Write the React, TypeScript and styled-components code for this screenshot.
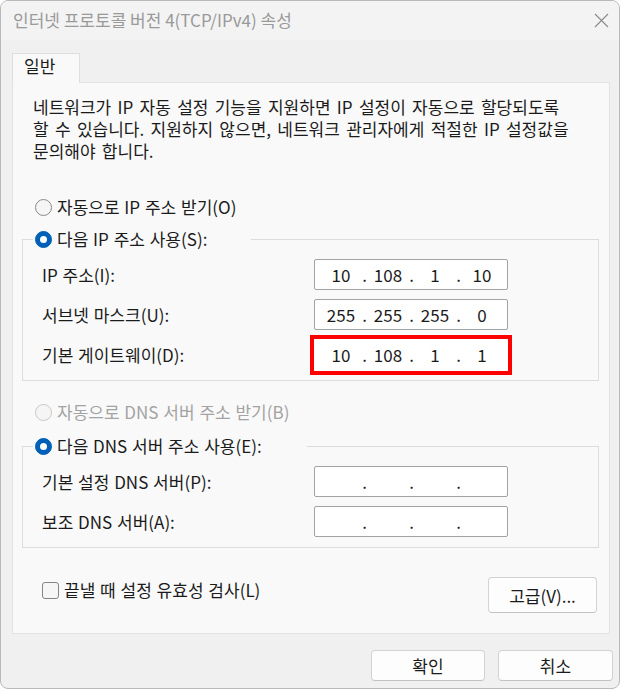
import React from "react";
import styled, { createGlobalStyle } from "styled-components";

const GlobalStyle = createGlobalStyle`
  body {
    margin: 0;
    background: #ffffff;
    font-family: "Noto Sans CJK KR", "Noto Sans", sans-serif;
    font-size: 17px;
    word-spacing: 1px;
    color: #1b1b1b;
  }
`;

const Window = styled.div`
  box-sizing: border-box;
  width: 620px;
  height: 689px;
  border: 1px solid #b9b9b9;
  border-radius: 8px;
  background: #f0f0f0;
  overflow: hidden;
  display: flex;
  flex-direction: column;
`;

const TitleBar = styled.div`
  height: 39px;
  display: flex;
  align-items: center;
  justify-content: space-between;
  padding: 0 10px 0 12px;
  background: #f3f3f3;
`;

const Title = styled.span`
  color: #9a9a9a;
  line-height: 22px;
  margin-top: -1px;
  word-spacing: 0;
`;

const Body = styled.div`
  flex: 1;
  display: flex;
  flex-direction: column;
  padding: 13px 0 0 11px;
`;

const TabStrip = styled.div`
  display: flex;
`;

const Tab = styled.div`
  box-sizing: border-box;
  width: 68px;
  height: 30px;
  margin-bottom: -1px;
  padding: 1px 0 0 11px;
  border: 1px solid #dedede;
  border-bottom: none;
  background: #f9f9f9;
  line-height: 22px;
  position: relative;
`;

const Panel = styled.div`
  box-sizing: border-box;
  height: 552px;
  margin-right: 9px;
  border: 1px solid #e2e2e2;
  background: #f9f9f9;
  padding: 13px 10px 0 9px;
  display: flex;
  flex-direction: column;
`;

const Description = styled.p`
  margin: 0 0 0 11px;
  line-height: 22px;
  word-spacing: 2.5px;
`;

const Choice = styled.label<{ $disabled?: boolean }>`
  display: flex;
  align-items: center;
  gap: 5px;
  height: 22px;
  line-height: 22px;
  color: ${(p) => (p.$disabled ? "#a3a3a3" : "#1b1b1b")};
`;

const RadioCircle = styled.span<{ $checked?: boolean; $disabled?: boolean }>`
  box-sizing: border-box;
  width: 17px;
  height: 17px;
  border-radius: 50%;
  flex-shrink: 0;
  display: flex;
  align-items: center;
  justify-content: center;
  background: ${(p) => (p.$checked ? "#0060b8" : "#f5f5f5")};
  border: 1px solid
    ${(p) => (p.$checked ? "#0060b8" : p.$disabled ? "#c8c8c8" : "#8a8a8a")};

  &::after {
    content: "";
    display: ${(p) => (p.$checked ? "block" : "none")};
    width: 7px;
    height: 7px;
    border-radius: 50%;
    background: #ffffff;
  }
`;

const ChoiceRow = styled.div<{ $top: number }>`
  margin: ${(p) => p.$top}px 0 0 13px;
`;

const Group = styled.fieldset<{ $top: number }>`
  margin: ${(p) => p.$top}px 0 0 0;
  padding: 9px 90px 10px 0;
  border: 1px solid #dcdcdc;
  display: flex;
  flex-direction: column;
  gap: 9px;
`;

const Legend = styled.legend<{ $width: number }>`
  box-sizing: border-box;
  width: ${(p) => p.$width}px;
  margin-left: 10px;
  padding: 0 0 0 2px;
  background: #f9f9f9;
`;

const FieldRow = styled.div`
  display: flex;
  align-items: center;
  justify-content: space-between;
  height: 31px;
  padding-left: 19px;
`;

const IpBox = styled.div<{ $highlight?: boolean }>`
  box-sizing: border-box;
  width: 194px;
  height: ${(p) => (p.$highlight ? 32 : 31)}px;
  display: flex;
  align-items: center;
  padding-left: 6px;
  background: #ffffff;
  border: 1px solid ${(p) => (p.$highlight ? "#ffffff" : "#a3a3a3")};
  border-radius: ${(p) => (p.$highlight ? 0 : 2)}px;
  outline: ${(p) => (p.$highlight ? "4px solid #ff0000" : "none")};
`;

const Octet = styled.span`
  width: 40px;
  text-align: center;
  line-height: 22px;
`;

const Dot = styled.span`
  width: 7px;
  text-align: center;
  line-height: 22px;
`;

const BottomRow = styled.div`
  margin: 29px 2px 0 20px;
  display: flex;
  justify-content: space-between;
  align-items: flex-start;
`;

const CheckLabel = styled.label`
  display: flex;
  align-items: center;
  gap: 5px;
  height: 22px;
  margin-top: 2px;
  line-height: 22px;
`;

const CheckBox = styled.span`
  box-sizing: border-box;
  width: 17px;
  height: 17px;
  border: 1px solid #858585;
  border-radius: 3px;
  background: #f6f6f6;
`;

const Button = styled.button<{ $width: number; $height: number }>`
  box-sizing: border-box;
  width: ${(p) => p.$width}px;
  height: ${(p) => p.$height}px;
  padding: 0;
  border: 1px solid #d3d3d3;
  border-bottom-color: #c2c2c2;
  border-radius: 4px;
  background: #fdfdfd;
  font-family: inherit;
  font-size: 17px;
  color: #1b1b1b;
`;

const Footer = styled.div`
  display: flex;
  justify-content: flex-end;
  gap: 13px;
  padding: 16px 6px 0 0;
`;

type RadioProps = { label: string; checked?: boolean; disabled?: boolean };

function Radio({ label, checked, disabled }: RadioProps) {
  return (
    <Choice $disabled={disabled}>
      <RadioCircle $checked={checked} $disabled={disabled} />
      {label}
    </Choice>
  );
}

function IpField({ value, highlight }: { value?: string[]; highlight?: boolean }) {
  const parts = value ?? ["", "", "", ""];
  return (
    <IpBox $highlight={highlight}>
      {parts.map((part, i) => (
        <React.Fragment key={i}>
          <Octet>{part}</Octet>
          {i < 3 && <Dot>.</Dot>}
        </React.Fragment>
      ))}
    </IpBox>
  );
}

function CloseIcon() {
  return (
    <svg width="15" height="15" viewBox="0 0 15 15">
      <path d="M1 1 L14 14 M14 1 L1 14" stroke="#8a8a8a" strokeWidth="1.1" fill="none" />
    </svg>
  );
}

export default function App() {
  return (
    <>
      <GlobalStyle />
      <Window>
        <TitleBar>
          <Title>인터넷 프로토콜 버전 4(TCP/IPv4) 속성</Title>
          <CloseIcon />
        </TitleBar>
        <Body>
          <TabStrip>
            <Tab>일반</Tab>
          </TabStrip>
          <Panel>
            <Description>
              네트워크가 IP 자동 설정 기능을 지원하면 IP 설정이 자동으로 할당되도록
              <br />
              할 수 있습니다. 지원하지 않으면, 네트워크 관리자에게 적절한 IP 설정값을
              <br />
              문의해야 합니다.
            </Description>

            <ChoiceRow $top={34}>
              <Radio label="자동으로 IP 주소 받기(O)" />
            </ChoiceRow>

            <Group $top={10}>
              <Legend $width={218}>
                <Radio label="다음 IP 주소 사용(S):" checked />
              </Legend>
              <FieldRow>
                <span>IP 주소(I):</span>
                <IpField value={["10", "108", "1", "10"]} />
              </FieldRow>
              <FieldRow>
                <span>서브넷 마스크(U):</span>
                <IpField value={["255", "255", "255", "0"]} />
              </FieldRow>
              <FieldRow>
                <span>기본 게이트웨이(D):</span>
                <IpField value={["10", "108", "1", "1"]} highlight />
              </FieldRow>
            </Group>

            <ChoiceRow $top={20}>
              <Radio label="자동으로 DNS 서버 주소 받기(B)" disabled />
            </ChoiceRow>

            <Group $top={12}>
              <Legend $width={274}>
                <Radio label="다음 DNS 서버 주소 사용(E):" checked />
              </Legend>
              <FieldRow>
                <span>기본 설정 DNS 서버(P):</span>
                <IpField />
              </FieldRow>
              <FieldRow>
                <span>보조 DNS 서버(A):</span>
                <IpField />
              </FieldRow>
            </Group>

            <BottomRow>
              <CheckLabel>
                <CheckBox />
                끝낼 때 설정 유효성 검사(L)
              </CheckLabel>
              <Button $width={109} $height={36}>고급(V)...</Button>
            </BottomRow>
          </Panel>
          <Footer>
            <Button $width={114} $height={31}>확인</Button>
            <Button $width={115} $height={31}>취소</Button>
          </Footer>
        </Body>
      </Window>
    </>
  );
}
